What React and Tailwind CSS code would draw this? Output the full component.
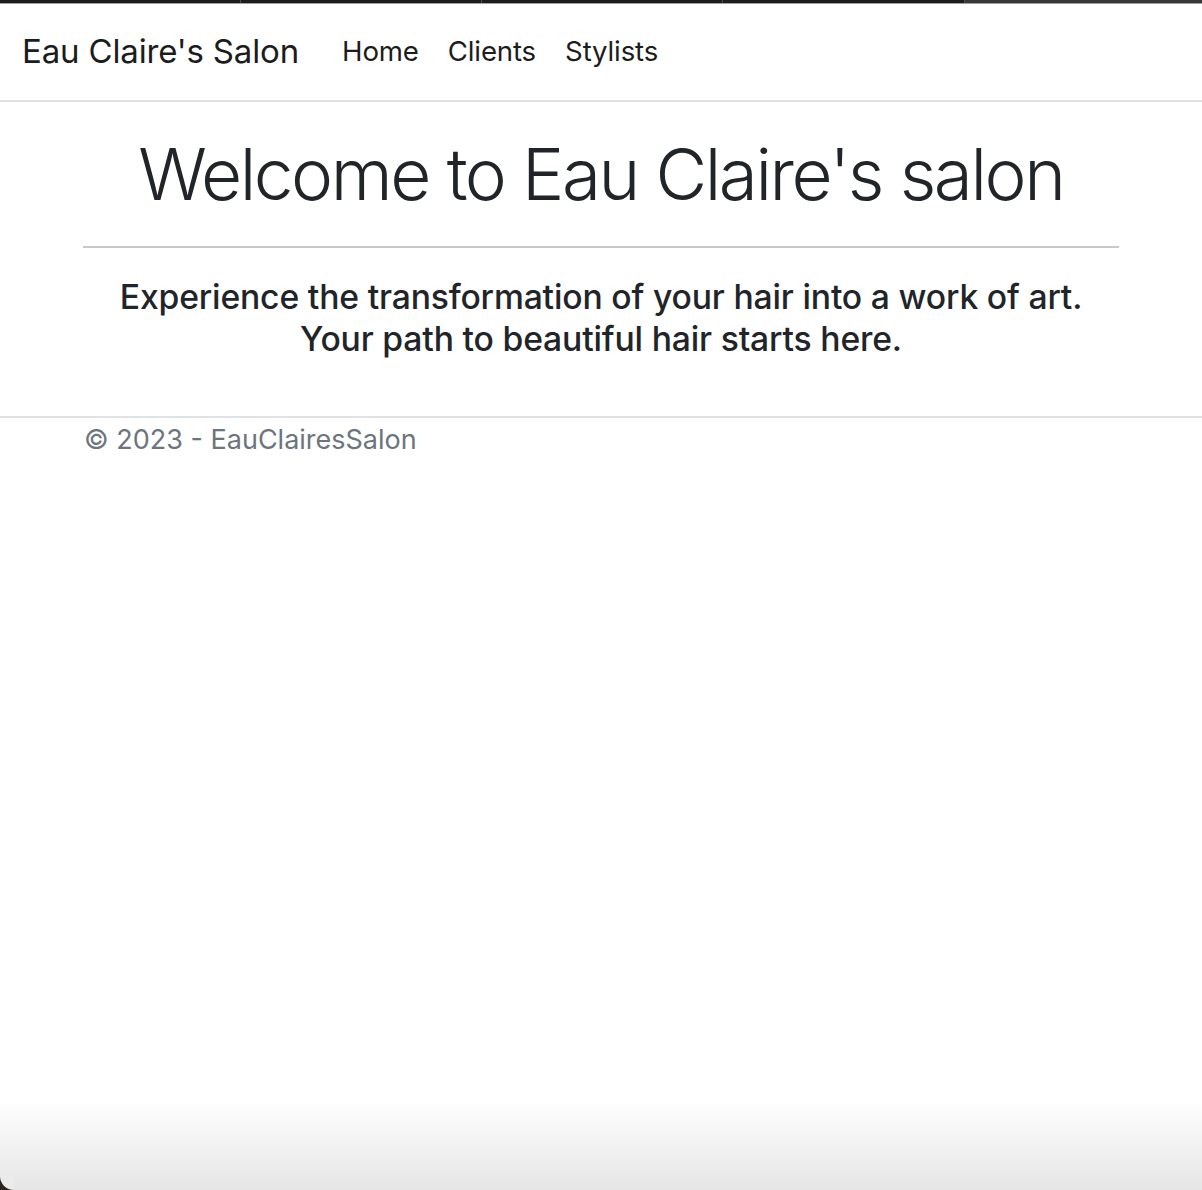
export default function App() {
  const font = { fontFamily: 'Inter, "Noto Sans", "Liberation Sans", sans-serif' };
  return (
    <div className="relative h-[1190px] w-full overflow-hidden bg-white text-[#212529]" style={font}>
      <div className="flex h-[3px] w-full bg-[#1c1c1c]">
        <div className="w-[240px] bg-[#1c1c1c]" />
        <div className="w-px bg-[#4a4a4a]" />
        <div className="w-[240px] bg-[#1c1c1c]" />
        <div className="w-px bg-[#4a4a4a]" />
        <div className="w-[240px] bg-[#1c1c1c]" />
        <div className="w-px bg-[#4a4a4a]" />
        <div className="w-[241px] bg-[#1c1c1c]" />
        <div className="w-px bg-[#4a4a4a]" />
        <div className="flex-1 bg-[#383838]" />
      </div>
      <div className="h-px w-full bg-[#a0a0a0]" />
      <nav className="flex h-[98px] items-center border-b-2 border-[#dfe1e5] px-[22px]">
        <span className="text-[33px] tracking-[-0.005em] text-[#1c1c1c]">Eau Claire's Salon</span>
        <div className="ml-[43px] flex gap-[29px] text-[27.6px] tracking-[-0.005em] text-[#1c1c1c]">
          <span>Home</span>
          <span>Clients</span>
          <span>Stylists</span>
        </div>
      </nav>
      <main className="mx-[83px] pb-[56px] text-center">
        <h1 className="pt-[30px] text-[71px] font-light leading-[1.2] tracking-[-0.034em]">Welcome to Eau Claire's salon</h1>
        <hr className="mt-[29px] border-t-2 border-[#c8c9ca]" />
        <p className="mt-[28px] text-[33.7px] font-medium leading-[42px] tracking-[-0.005em]">
          Experience the transformation of your hair into a work of art.
          <br />
          Your path to beautiful hair starts here.
        </p>
      </main>
      <footer className="border-t-2 border-[#dfe1e5]">
        <div className="mx-[84px] pt-[2px] text-[27px] leading-[40px] text-[#6c757d]">© 2023 - EauClairesSalon</div>
      </footer>
      <div className="pointer-events-none absolute bottom-0 left-0 h-[90px] w-full bg-gradient-to-b from-transparent to-[#e5e5e5]" />
      <div className="pointer-events-none absolute bottom-0 left-0 h-[14px] w-[14px] overflow-hidden bg-[#2a2520]">
        <div className="absolute bottom-0 left-0 h-[28px] w-[28px] rounded-bl-[14px] bg-[#ebebeb]" />
      </div>
    </div>
  );
}
